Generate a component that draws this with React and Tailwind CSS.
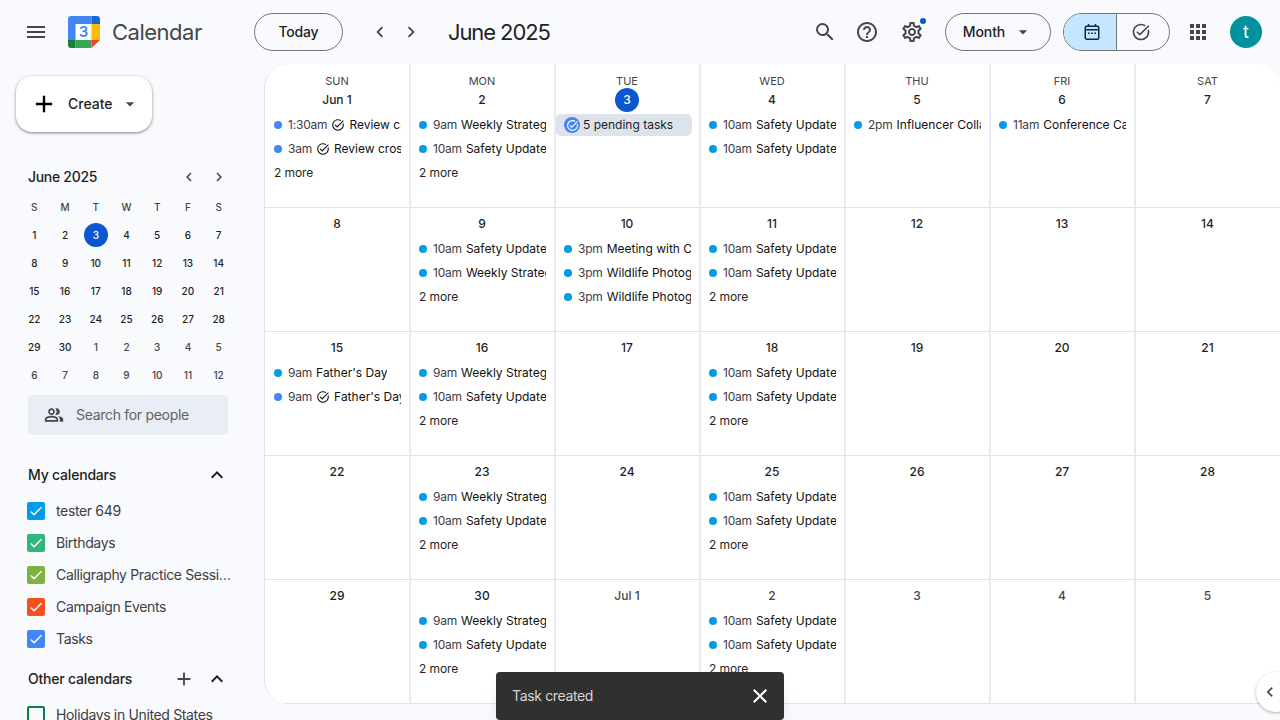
import React from 'react';
import {
  MdMenu, MdSearch, MdHelpOutline, MdOutlineSettings, MdChevronLeft, MdChevronRight,
  MdArrowDropDown, MdApps, MdExpandLess, MdAdd, MdClose, MdOutlinePeopleAlt,
  MdOutlineTaskAlt, MdCheck,
} from 'react-icons/md';

const font = { fontFamily: 'Inter, "Liberation Sans", sans-serif' };

const miniDays = [
  [1, 2, 3, 4, 5, 6, 7], [8, 9, 10, 11, 12, 13, 14], [15, 16, 17, 18, 19, 20, 21],
  [22, 23, 24, 25, 26, 27, 28], [29, 30, 1, 2, 3, 4, 5], [6, 7, 8, 9, 10, 11, 12],
];

const myCalendars = [
  { name: 'tester 649', color: 'bg-[#039be5]' },
  { name: 'Birthdays', color: 'bg-[#33b679]' },
  { name: 'Calligraphy Practice Sessions', color: 'bg-[#7cb342]' },
  { name: 'Campaign Events', color: 'bg-[#f4511e]' },
  { name: 'Tasks', color: 'bg-[#4285f4]' },
];

const weekly = { time: '9am', title: 'Weekly Strategy Meeting' };
const safety = { time: '10am', title: 'Safety Update Meeting' };

const cells = [
  { label: 'Jun 1', day: 'SUN', events: [{ time: '1:30am', title: 'Review cross-team plan', task: true }, { time: '3am', title: 'Review cross-team plan', task: true }], more: true },
  { label: '2', day: 'MON', events: [weekly, safety], more: true },
  { label: '3', day: 'TUE', today: true, pending: true },
  { label: '4', day: 'WED', events: [safety, safety] },
  { label: '5', day: 'THU', events: [{ time: '2pm', title: 'Influencer Collaboration' }] },
  { label: '6', day: 'FRI', events: [{ time: '11am', title: 'Conference Call' }] },
  { label: '7', day: 'SAT' },
  { label: '8' },
  { label: '9', events: [safety, { time: '10am', title: 'Weekly Strategy Meeting' }], more: true },
  { label: '10', events: [{ time: '3pm', title: 'Meeting with Client' }, { time: '3pm', title: 'Wildlife Photography' }, { time: '3pm', title: 'Wildlife Photography' }] },
  { label: '11', events: [safety, safety], more: true },
  { label: '12' }, { label: '13' }, { label: '14' },
  { label: '15', events: [{ time: '9am', title: "Father's Day" }, { time: '9am', title: "Father's Day", task: true }] },
  { label: '16', events: [weekly, safety], more: true },
  { label: '17' },
  { label: '18', events: [safety, safety], more: true },
  { label: '19' }, { label: '20' }, { label: '21' },
  { label: '22' },
  { label: '23', events: [weekly, safety], more: true },
  { label: '24' },
  { label: '25', events: [safety, safety], more: true },
  { label: '26' }, { label: '27' }, { label: '28' },
  { label: '29' },
  { label: '30', events: [weekly, safety], more: true },
  { label: 'Jul 1', muted: true },
  { label: '2', muted: true, events: [safety, safety], more: true },
  { label: '3', muted: true }, { label: '4', muted: true }, { label: '5', muted: true },
];

const GoogleLogo = () => (
  <svg viewBox="0 0 32 32" className="w-8 h-8 shrink-0">
    <rect x="7.5" y="8" width="16" height="16" fill="#fff" />
    <path d="M23.5 0H3A3 3 0 0 0 0 3V24h7.5V8h16z" fill="#4285f4" />
    <path d="M23.5 0v8H32V3a3 3 0 0 0-3-3z" fill="#1967d2" />
    <rect x="23.5" y="8" width="8.5" height="16" fill="#fbbc04" />
    <rect x="7.5" y="24" width="16" height="8" fill="#34a853" />
    <path d="M0 24v5a3 3 0 0 0 3 3h4.5v-8z" fill="#188038" />
    <path d="M23.5 24V32L32 24z" fill="#ea4335" />
    <text x="15.5" y="21" textAnchor="middle" fontSize="15" fontWeight="600" fill="#4285f4">3</text>
  </svg>
);

const MonthViewIcon = () => (
  <svg viewBox="0 0 18 18" className="w-[18px] h-[18px]" fill="none" stroke="#0b2a42" strokeWidth="1.5">
    <rect x="2.25" y="3.25" width="13.5" height="13" rx="1.5" />
    <path d="M2.25 6.75h13.5M5.5 1v3M12.5 1v3" />
    <path d="M5 10.25h1.6M8.2 10.25h1.6M11.4 10.25H13" strokeWidth="1.3" />
  </svg>
);

const IconButton = ({ children, className = '' }) => (
  <div className={`flex items-center justify-center text-[#444746] ${className}`}>{children}</div>
);

const Header = () => (
  <header className="h-16 flex items-center relative">
    <IconButton className="w-12 h-12 ml-3"><MdMenu size={24} /></IconButton>
    <div className="ml-2"><GoogleLogo /></div>
    <span className="ml-3 w-[142px] text-[22px] tracking-[-0.5px] text-[#444746]">Calendar</span>
    <button className="w-[89px] h-[38px] rounded-full border border-[#747775] text-sm font-[450] tracking-[-0.2px] text-[#1f1f1f]">Today</button>
    <IconButton className="w-8 h-8 ml-[21px]"><MdChevronLeft size={22} /></IconButton>
    <IconButton className="w-8 h-8 ml-[-1px]"><MdChevronRight size={22} /></IconButton>
    <span className="ml-[21px] text-[22px] tracking-[-1.1px] text-[#1f1f1f]">June 2025</span>
    <div className="flex-1" />
    <IconButton className="w-10 h-10"><MdSearch size={24} /></IconButton>
    <IconButton className="w-10 h-10 ml-[2px]"><MdHelpOutline size={24} /></IconButton>
    <IconButton className="w-10 h-10 ml-[5px] relative">
      <MdOutlineSettings size={24} />
      <span className="absolute top-[6px] right-[6px] w-[6px] h-[6px] rounded-full bg-[#0b57d0]" />
    </IconButton>
    <button className="w-[106px] h-[38px] ml-[13px] rounded-full border border-[#747775] flex items-center justify-center text-sm font-[450] tracking-[-0.1px] text-[#1f1f1f]">
      <span className="mr-[2px]">Month</span>
      <MdArrowDropDown size={20} className="ml-[6px] text-[#444746]" />
    </button>
    <div className="w-[107px] h-[38px] ml-3 rounded-full border border-[#747775] flex overflow-hidden">
      <div className="w-[53px] pl-1 bg-[#c2e7ff] border-r border-[#747775] flex items-center justify-center">
        <MonthViewIcon />
      </div>
      <div className="flex-1 pr-1 flex items-center justify-center text-[#444746]">
        <MdOutlineTaskAlt size={20} />
      </div>
    </div>
    <IconButton className="w-10 h-10 ml-2"><MdApps size={24} /></IconButton>
    <div className="w-8 h-8 ml-3 mr-[18px] rounded-full bg-[#00929f] text-white text-lg flex items-center justify-center">t</div>
  </header>
);

const CalendarRow = ({ name, color }) => (
  <div className="h-8 flex items-center pl-[27px] pr-[33px]">
    <span className={`w-[18px] h-[18px] rounded-[2px] shrink-0 flex items-center justify-center text-white ${color}`}>
      <MdCheck size={16} />
    </span>
    <span className="ml-[11px] text-sm tracking-[-0.35px] text-[#3c4043] truncate">{name}</span>
  </div>
);

const Sidebar = () => (
  <aside className="w-[264px] shrink-0 overflow-hidden">
    <button className="mt-3 ml-4 w-[136px] h-14 rounded-2xl bg-white shadow-[0_1px_3px_1px_rgba(0,0,0,0.15),0_1px_2px_rgba(0,0,0,0.3)] flex items-center text-sm font-[450] text-[#1f1f1f]">
      <MdAdd size={28} className="ml-[14px] text-black" />
      <span className="ml-[10px]">Create</span>
      <MdArrowDropDown size={20} className="ml-[7px] text-[#444746]" />
    </button>

    <div className="mt-[31px] ml-7 w-[205px] h-7 flex items-center">
      <span className="text-sm font-[450] tracking-[-0.3px] text-[#1f1f1f]">June 2025</span>
      <div className="flex-1" />
      <IconButton className="w-7 h-7"><MdChevronLeft size={18} /></IconButton>
      <IconButton className="w-7 h-7 ml-[2px]"><MdChevronRight size={18} /></IconButton>
    </div>

    <div className="mt-[2px] ml-[19px] w-[215px] grid grid-cols-7 auto-rows-[28px] text-[10px] font-[450]">
      {['S', 'M', 'T', 'W', 'T', 'F', 'S'].map((d, i) => (
        <div key={i} className="flex items-center justify-center text-[#444746]">{d}</div>
      ))}
      {miniDays.flat().map((d, i) => {
        const other = i > 29;
        return (
          <div key={i} className={`flex items-center justify-center ${other ? 'text-[#444746]' : 'text-[#1f1f1f]'}`}>
            {i === 2 ? (
              <span className="w-6 h-6 rounded-full bg-[#0b57d0] text-white flex items-center justify-center">{d}</span>
            ) : d}
          </div>
        );
      })}
    </div>

    <div className="mt-[6px] ml-7 w-[200px] h-10 rounded bg-[#e9eef6] flex items-center text-sm tracking-[-0.3px] text-[#5f6368]">
      <MdOutlinePeopleAlt size={20} className="ml-4 text-[#444746]" />
      <span className="ml-3">Search for people</span>
    </div>

    <div className="mt-6 h-8 ml-7 mr-[35px] flex items-center justify-between text-sm font-[450] tracking-[-0.2px] text-[#1f1f1f]">
      <span>My calendars</span>
      <MdExpandLess size={24} />
    </div>
    <div className="mt-1">
      {myCalendars.map(c => <CalendarRow key={c.name} {...c} />)}
    </div>

    <div className="mt-2 h-8 ml-7 mr-[35px] flex items-center text-sm font-[450] tracking-[-0.2px] text-[#1f1f1f]">
      <span>Other calendars</span>
      <div className="flex-1" />
      <MdAdd size={22} className="text-[#444746]" />
      <MdExpandLess size={24} className="ml-[10px]" />
    </div>
    <div className="mt-1 h-8 flex items-center pl-[27px]">
      <span className="w-[18px] h-[18px] rounded-[2px] border-2 border-[#0b8043] shrink-0" />
      <span className="ml-[11px] text-sm tracking-[-0.35px] text-[#3c4043] truncate">Holidays in United States</span>
    </div>
  </aside>
);

const EventRow = ({ time, title, task }) => (
  <div className="h-6 pl-[9px] pr-2 flex items-center text-xs text-[#1f1f1f] whitespace-nowrap overflow-hidden">
    <span className={`w-2 h-2 rounded-full shrink-0 ${task ? 'bg-[#4285f4]' : 'bg-[#039be5]'}`} />
    <span className="ml-[6px] tracking-[-0.2px] text-[#3c4043]">{time}</span>
    {task && <MdOutlineTaskAlt size={14} className="ml-1 shrink-0" />}
    <span className="ml-1 overflow-hidden text-[#111]">{title}</span>
  </div>
);

const DayCell = ({ label, day, today, pending, events = [], more, muted, inset }) => (
  <div className="border-r-2 border-r-[#e8ebf2] border-b border-b-[#dde3ea] [&:nth-child(7n)]:border-r-0 min-w-0 overflow-hidden">
    <div className={inset ? '-ml-px' : ''}>
      {day && <div className="h-[11px] pt-3 box-content flex items-center justify-center text-[11px] text-[#444746] leading-none">{day}</div>}
      <div className={`flex items-center justify-center text-xs font-[450] ${day ? 'h-6 mt-[1px]' : 'h-6 pt-1 box-content'} ${muted ? 'text-[#444746]' : 'text-[#1f1f1f]'}`}>
        {today ? (
          <span className="w-6 h-6 rounded-full bg-[#0b57d0] text-white flex items-center justify-center">{label}</span>
        ) : label}
      </div>
      <div className="mt-[1px]">
        {pending && (
          <div className="h-[22px] mr-[7px] mt-[2px] rounded-[6px] bg-[#dde3ea] flex items-center text-xs text-[#1f1f1f]">
            <span className="ml-[9px] w-4 h-4 rounded-full bg-[#4285f4] text-white flex items-center justify-center">
              <MdOutlineTaskAlt size={13} />
            </span>
            <span className="ml-[3px]">5 pending tasks</span>
          </div>
        )}
        {events.map((e, i) => <EventRow key={i} {...e} />)}
        {more && <div className="h-6 pl-[9px] flex items-center text-xs tracking-[-0.1px] text-[#1f1f1f]">2 more</div>}
      </div>
    </div>
  </div>
);

const MonthGrid = () => (
  <main className="w-[1016px] h-[640px] border-l border-[#dde3ea] rounded-t-[24px] rounded-bl-[24px] bg-white overflow-hidden">
    <div className="grid grid-cols-[146px_repeat(5,145px)_144px] grid-rows-[144px_repeat(4,124px)]">
      {cells.map((c, i) => <DayCell key={i} {...c} inset={i % 7 !== 0} />)}
    </div>
  </main>
);

export default function App() {
  return (
    <div className="relative w-[1280px] h-[720px] overflow-hidden bg-[#f8fafd]" style={font}>
      <Header />
      <div className="flex">
        <Sidebar />
        <MonthGrid />
      </div>

      {/* snackbar */}
      <div className="absolute left-[496px] top-[672px] w-[288px] h-12 rounded bg-[#303030] shadow-lg flex items-center justify-between pl-4 pr-[12px] text-sm tracking-[-0.35px] text-[#d6d6d6]">
        <span>Task created</span>
        <MdClose size={24} className="text-white" />
      </div>

      {/* side panel toggle */}
      <div className="absolute left-[1256px] top-[672px] w-10 h-10 rounded-full bg-white shadow-[0_1px_3px_rgba(0,0,0,0.3)] flex items-center pl-1 text-[#444746]">
        <MdChevronLeft size={20} />
      </div>
    </div>
  );
}
